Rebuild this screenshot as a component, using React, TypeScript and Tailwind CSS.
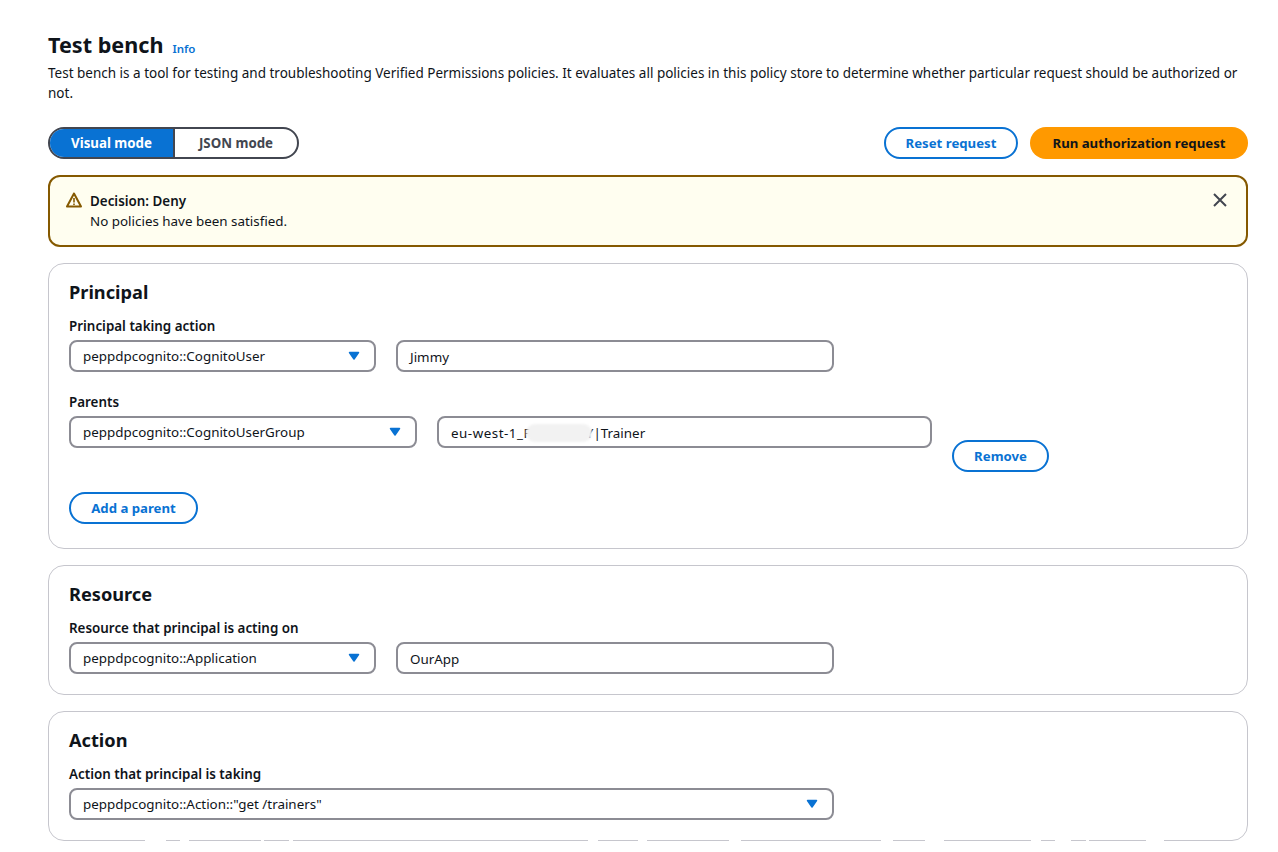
import React from "react";

const font = { fontFamily: '"Noto Sans", "Open Sans", sans-serif' };

const borderGaps: [number, number][] = [
  [145, 21], [180, 9], [261, 3], [289, 4], [588, 10], [638, 9], [729, 12],
  [881, 12], [925, 19], [1031, 10], [1055, 16], [1086, 3], [1146, 18],
];

function Caret() {
  return (
    <svg width="12" height="10" viewBox="0 0 12 10" className="shrink-0">
      <path d="M1.5 1.5h9L6 8z" fill="#0972d3" stroke="#0972d3" strokeWidth="1.5" strokeLinejoin="round" />
    </svg>
  );
}

function Select({ value, className }: { value: string; className: string }) {
  return (
    <div className={`h-8 flex items-center justify-between pl-[12px] pr-[14px] border-2 border-[#8c8c94] rounded-lg bg-white text-[13.4px] text-[#0f141a] shrink-0 ${className}`}>
      <span>{value}</span>
      <Caret />
    </div>
  );
}

function Input({ children, className }: { children: React.ReactNode; className: string }) {
  return (
    <div className={`h-8 flex items-center pl-[12px] pt-[2px] border-2 border-[#8c8c94] rounded-lg bg-white text-[13.4px] text-[#0f141a] shrink-0 relative ${className}`}>
      {children}
    </div>
  );
}

function OutlineButton({ children, className }: { children: React.ReactNode; className: string }) {
  return (
    <button className={`h-8 pt-px border-2 border-[#0972d3] rounded-full bg-white text-[#0972d3] text-[13.2px] font-bold flex items-center justify-center ${className}`}>
      {children}
    </button>
  );
}

function Label({ children }: { children: React.ReactNode }) {
  return <div className="text-[13.4px] font-semibold text-[#0f141a] leading-5">{children}</div>;
}

function CardTitle({ children }: { children: React.ReactNode }) {
  return <h2 className="text-[18.2px] font-bold text-[#0f141a] leading-6">{children}</h2>;
}

export default function App() {
  return (
    <div style={font} className="w-[1278px] h-[852px] overflow-hidden bg-white pl-12 pr-[30px] pt-[30px] text-[#0f141a]">
      <div className="flex items-baseline gap-[9px]">
        <h1 className="text-[21.6px] leading-[30px] font-bold">Test bench</h1>
        <a className="text-[11.5px] font-semibold text-[#0972d3]">Info</a>
      </div>
      <p className="text-[13.5px] leading-5 mt-[3px]">
        Test bench is a tool for testing and troubleshooting Verified Permissions policies. It evaluates all policies in this policy store to determine whether particular request should be authorized or not.
      </p>

      <div className="flex items-center justify-between mt-6">
        <div className="flex h-8 w-[251px] border-2 border-[#424650] rounded-full overflow-hidden text-[13.3px] font-bold">
          <div className="w-[125px] pt-px bg-[#0972d3] text-white flex items-center justify-center border-r-2 border-[#424650]">Visual mode</div>
          <div className="flex-1 pt-px flex items-center justify-center text-[#424650]">JSON mode</div>
        </div>
        <div className="flex gap-3">
          <OutlineButton className="w-[134px]">Reset request</OutlineButton>
          <button className="h-8 pt-px w-[218px] rounded-full bg-[#ff9900] text-[#0f141a] text-[13.2px] font-bold">Run authorization request</button>
        </div>
      </div>

      <div className="mt-4 h-[72px] border-2 border-[#855900] rounded-xl bg-[#fffef0] pl-4 pr-[18px] pt-[14px] flex">
        <svg width="16" height="16" viewBox="0 0 16 16" className="mt-[1px] shrink-0" fill="none">
          <path d="M8 1.5 1 14.5h14z" stroke="#855900" strokeWidth="2" strokeLinejoin="round" />
          <path d="M8 6v4.5M8 11.5v1.5" stroke="#855900" strokeWidth="1.6" />
        </svg>
        <div className="ml-2 flex-1 text-[13.4px] leading-5">
          <div className="font-semibold">Decision: Deny</div>
          <div>No policies have been satisfied.</div>
        </div>
        <svg width="16" height="16" viewBox="0 0 16 16" className="mt-[1px] shrink-0" fill="none">
          <path d="m2 2 12 12M14 2 2 14" stroke="#424650" strokeWidth="2" />
        </svg>
      </div>

      <section className="mt-4 h-[286px] border border-[#c6c6cd] rounded-2xl px-5 pt-4">
        <CardTitle>Principal</CardTitle>
        <div className="mt-[12px]"><Label>Principal taking action</Label></div>
        <div className="flex gap-5 mt-1">
          <Select value="peppdpcognito::CognitoUser" className="w-[307px]" />
          <Input className="w-[438px]">Jimmy</Input>
        </div>
        <div className="mt-[20px]"><Label>Parents</Label></div>
        <div className="flex gap-5 mt-1">
          <Select value="peppdpcognito::CognitoUserGroup" className="w-[348px]" />
          <Input className="w-[495px]">
            <span className="tracking-[0.5px]">eu-west-1_F</span>
            <span className="inline-block w-[55px]" />
            Y|Trainer
            <span className="absolute left-[87px] top-[6px] w-[66px] h-[18px] rounded-full bg-[#f2f2f2] blur-[1px]" />
          </Input>
          <OutlineButton className="w-[97px] mt-[24px]">Remove</OutlineButton>
        </div>
        <OutlineButton className="w-[129px] mt-5">Add a parent</OutlineButton>
      </section>

      <section className="mt-4 h-[130px] border border-[#c6c6cd] rounded-2xl px-5 pt-4">
        <CardTitle>Resource</CardTitle>
        <div className="mt-[12px]"><Label>Resource that principal is acting on</Label></div>
        <div className="flex gap-5 mt-1">
          <Select value="peppdpcognito::Application" className="w-[307px]" />
          <Input className="w-[438px]">OurApp</Input>
        </div>
      </section>

      <section className="relative mt-4 h-[130px] border border-[#c6c6cd] rounded-2xl px-5 pt-4">
        <CardTitle>Action</CardTitle>
        <div className="mt-[12px]"><Label>Action that principal is taking</Label></div>
        <div className="mt-1">
          <Select value={'peppdpcognito::Action::"get /trainers"'} className="w-[765px]" />
        </div>
        {borderGaps.map(([x, w]) => (
          <span key={x} className="absolute bottom-[-1px] h-px bg-white" style={{ left: x - 49, width: w }} />
        ))}
      </section>
    </div>
  );
}
